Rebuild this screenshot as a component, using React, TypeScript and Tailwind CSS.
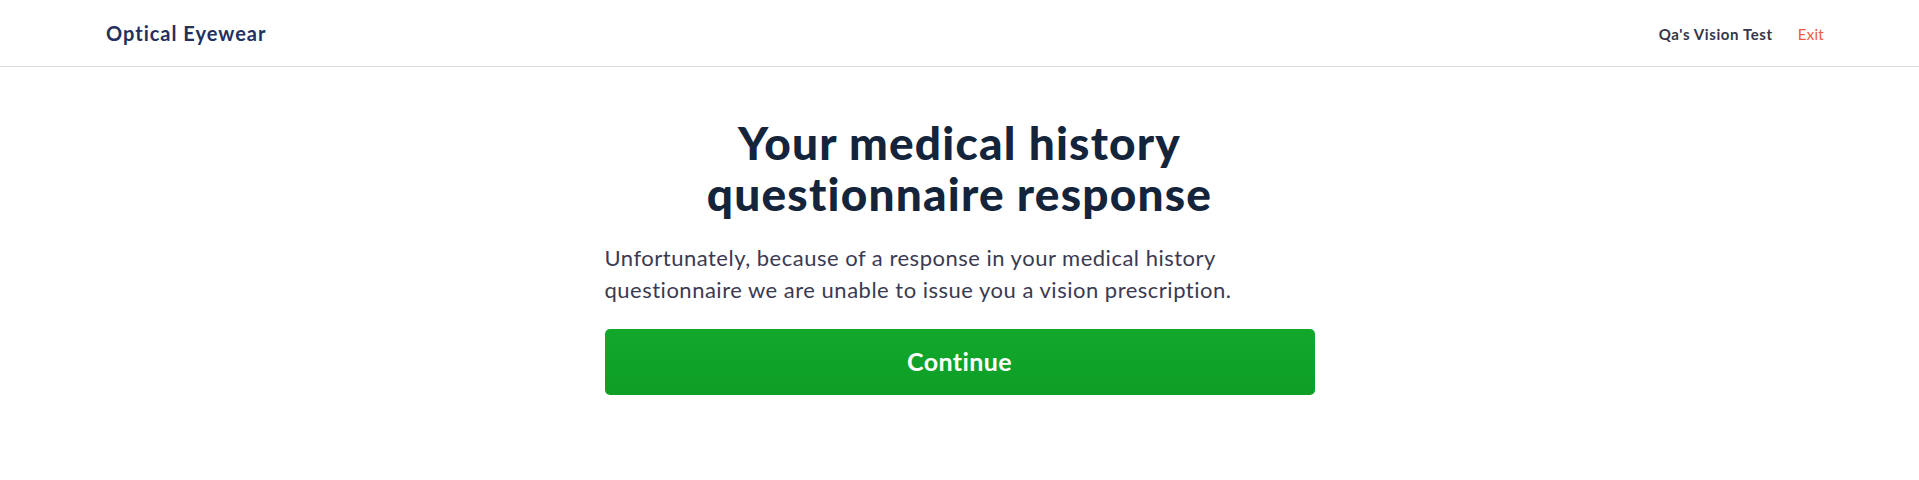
export default function App() {
  return (
    <div className="min-h-screen bg-white" style={{ fontFamily: "Lato, 'Liberation Sans', sans-serif" }}>
      {/* Top bar */}
      <header className="flex h-[67px] items-center justify-between border-b border-[#dcdcdc] pl-[106px] pr-[95px]">
        <a className="text-[20px] font-bold tracking-[1px] text-[#24305e]">Optical Eyewear</a>
        <nav className="flex items-center gap-[25px] pt-[3px]">
          <span className="text-[15px] font-bold tracking-[0.6px] text-[#35354b]">Qa's Vision Test</span>
          <button className="text-[15px] tracking-[0.3px] text-[#ee5a40]">Exit</button>
        </nav>
      </header>

      <main className="mx-auto flex w-[710px] flex-col pt-[50px]">
        <h1 className="text-center text-[46px] leading-[51px] font-black tracking-[1.2px] text-[#14243a]">
          <span className="block">Your medical history</span>
          <span className="block">questionnaire response</span>
        </h1>
        <p className="mt-[23px] text-[22px] leading-[32px] tracking-[0.5px] text-[#3a3a52]">
          Unfortunately, because of a response in your medical history questionnaire we are unable to issue you a vision
          prescription.
        </p>
        <button className="mt-[23px] flex h-[66px] w-full items-center justify-center rounded-[5px] bg-gradient-to-b from-[#12a82c] to-[#0e9e26] text-[25px] font-bold tracking-[0.4px] text-white">
          Continue
        </button>
      </main>
    </div>
  );
}
